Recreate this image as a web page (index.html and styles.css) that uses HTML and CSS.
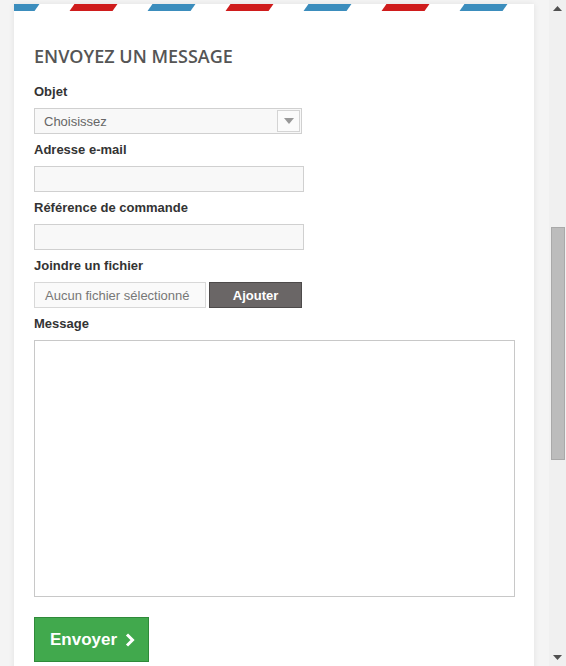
FILE: index.html
```html
<!DOCTYPE html>
<html lang="fr">
<head>
<meta charset="utf-8">
<title>Envoyez un message</title>
<link rel="stylesheet" href="styles.css">
</head>
<body>
<div class="page">
  <div class="main">
    <div class="card">
      <div class="stripes">
        <span class="stripe blue"></span><span class="stripe red"></span><span class="stripe blue"></span><span class="stripe red"></span><span class="stripe blue"></span><span class="stripe red"></span><span class="stripe blue"></span><span class="stripe red"></span>
      </div>
      <form class="form">
        <h1 class="title">Envoyez un message</h1>
        <div class="group">
          <label class="label">Objet</label>
          <div class="select">
            <span class="select-text">Choisissez</span>
            <span class="select-arrow"><svg width="10" height="6" viewBox="0 0 10 6"><path d="M0 0h10L5 6z" fill="#999"/></svg></span>
          </div>
        </div>
        <div class="group">
          <label class="label">Adresse e-mail</label>
          <div class="input"></div>
        </div>
        <div class="group">
          <label class="label">Référence de commande</label>
          <div class="input"></div>
        </div>
        <div class="group">
          <label class="label">Joindre un fichier</label>
          <div class="file-row">
            <span class="file-name">Aucun fichier sélectionné</span>
            <span class="file-btn">Ajouter</span>
          </div>
        </div>
        <div class="group">
          <label class="label">Message</label>
          <div class="textarea"></div>
        </div>
        <div class="submit">
          <span>Envoyer</span>
          <svg class="chev" width="10" height="14" viewBox="0 0 10 14"><path d="M2 1.5l5.5 5.5L2 12.5" fill="none" stroke="#fff" stroke-width="3"/></svg>
        </div>
      </form>
    </div>
  </div>
  <div class="scrollbar">
    <div class="sb-arrow"><svg width="9" height="5" viewBox="0 0 9 5"><path d="M0 5h9L4.5 0z" fill="#505050"/></svg></div>
    <div class="sb-track">
      <div class="sb-thumb"></div>
    </div>
    <div class="sb-arrow"><svg width="9" height="5" viewBox="0 0 9 5"><path d="M0 0h9L4.5 5z" fill="#505050"/></svg></div>
  </div>
</div>
</body>
</html>
```

FILE: styles.css
```css
* { box-sizing: border-box; }
html, body { margin: 0; padding: 0; }
body {
  background: #f4f4f4;
  font-family: "Liberation Sans", Arial, sans-serif;
  overflow: hidden;
}
.page {
  display: flex;
  height: 666px;
  width: 566px;
}
.main {
  flex: 1;
  padding: 4px 15px 0 14px;
  overflow: hidden;
}
.card {
  background: #fff;
  height: 700px;
  box-shadow: 0 0 6px rgba(0,0,0,0.08);
}
.stripes {
  height: 7px;
  display: flex;
  gap: 35px;
  overflow: hidden;
}
.stripe {
  flex: none;
  width: 43px;
  height: 7px;
  transform: skewX(-35deg);
}
.stripe:first-child { margin-left: -20px; }
.blue { background: #3b8dbd; }
.red { background: #cf1c1c; }
.form {
  padding: 32px 20px 0 20px;
}
.title {
  margin: 0 0 15px 0;
  font-family: "Open Sans", sans-serif;
  font-weight: 600;
  font-size: 18px;
  line-height: 26px;
  text-transform: uppercase;
  color: #555;
}
.group { margin-bottom: 8px; }
.label {
  display: block;
  font-weight: bold;
  font-size: 13px;
  line-height: 16px;
  color: #333;
  margin-bottom: 8px;
}
.select {
  width: 268px;
  height: 26px;
  border: 1px solid #d0d0d0;
  background: #f8f8f8;
  display: flex;
  align-items: center;
  justify-content: space-between;
  padding: 0 1px 0 9px;
}
.select-text { font-size: 13px; color: #666; }
.select-arrow {
  width: 23px;
  height: 22px;
  border: 1px solid #d4d4d4;
  background: #fbfbfb;
  display: flex;
  align-items: center;
  justify-content: center;
}
.input {
  width: 270px;
  height: 26px;
  border: 1px solid #d0d0d0;
  background: #f8f8f8;
}
.file-row {
  display: flex;
  gap: 3px;
  height: 26px;
}
.file-name {
  width: 172px;
  border: 1px solid #d8d8d8;
  background: #fafafa;
  font-size: 13px;
  color: #777;
  display: flex;
  align-items: center;
  padding-left: 10px;
}
.file-btn {
  width: 93px;
  background: #6a6666;
  border: 1px solid #4d4a4a;
  color: #fff;
  font-weight: bold;
  font-size: 13px;
  display: flex;
  align-items: center;
  justify-content: center;
}
.textarea {
  width: 481px;
  height: 257px;
  border: 1px solid #c8c8c8;
  background: #fff;
}
.submit {
  margin-top: 20px;
  width: 115px;
  height: 45px;
  background: #41a94d;
  border: 1px solid #2f8a3a;
  color: #fff;
  font-weight: bold;
  font-size: 17px;
  display: flex;
  align-items: center;
  padding-left: 15px;
  gap: 8px;
}
.chev { display: block; }
.scrollbar {
  width: 17px;
  background: #f0f0f0;
  display: flex;
  flex-direction: column;
}
.sb-arrow {
  height: 17px;
  display: flex;
  align-items: center;
  justify-content: center;
}
.sb-track {
  flex: 1;
  padding-top: 210px;
  display: flex;
  justify-content: center;
}
.sb-thumb {
  width: 14px;
  height: 233px;
  background: #bcbcbc;
  border: 1px solid #a9a9a9;
}
```
